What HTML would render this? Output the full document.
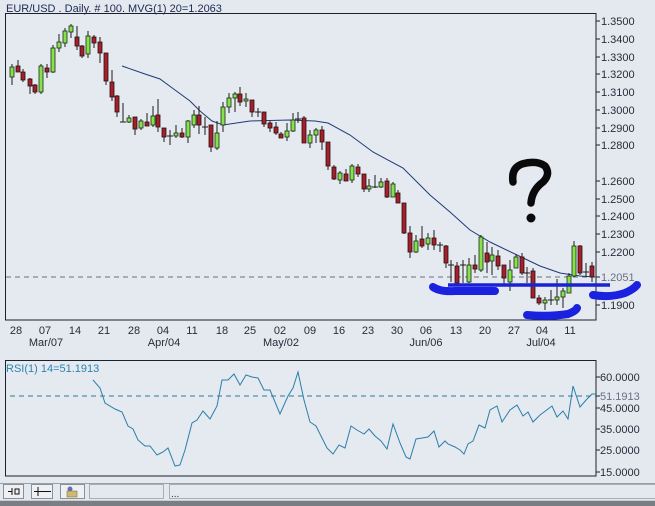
<!DOCTYPE html>
<html><head><meta charset="utf-8">
<style>
html,body{margin:0;padding:0;background:#e4e8ef;}
body{width:655px;height:506px;overflow:hidden;position:relative;font-family:"Liberation Sans",sans-serif;}
svg{position:absolute;left:0;top:0;}
text{font-family:"Liberation Sans",sans-serif;font-size:11px;fill:#2a2a3a;}
.g{fill:#86e24a;stroke:#1a2a1a;stroke-width:0.8}
.r{fill:#a3202c;stroke:#2a1010;stroke-width:0.8}
</style></head><body>
<svg width="655" height="506" viewBox="0 0 655 506">
<rect x="0" y="0" width="655" height="506" fill="#e4e8ef"/>
<rect x="5.5" y="13.5" width="590.5" height="306.5" fill="#e5e9f0" stroke="#1a2230" stroke-width="1"/>
<text x="6" y="12" style="fill:#1c2a50">EUR/USD . Daily. # 100. MVG(1) 20=1.2063</text>
<g stroke="#1a2230" stroke-width="1">
<line x1="596" y1="21" x2="600" y2="21"/><line x1="596" y1="39" x2="600" y2="39"/><line x1="596" y1="57" x2="600" y2="57"/><line x1="596" y1="74" x2="600" y2="74"/><line x1="596" y1="92" x2="600" y2="92"/><line x1="596" y1="110" x2="600" y2="110"/><line x1="596" y1="128" x2="600" y2="128"/><line x1="596" y1="145" x2="600" y2="145"/><line x1="596" y1="181" x2="600" y2="181"/><line x1="596" y1="199" x2="600" y2="199"/><line x1="596" y1="216" x2="600" y2="216"/><line x1="596" y1="234" x2="600" y2="234"/><line x1="596" y1="252" x2="600" y2="252"/><line x1="596" y1="277" x2="600" y2="277"/><line x1="596" y1="305" x2="600" y2="305"/>
</g>
<g>
<text x="601" y="25">1.3500</text><text x="601" y="43">1.3400</text><text x="601" y="61">1.3300</text><text x="601" y="78">1.3200</text><text x="601" y="96">1.3100</text><text x="601" y="114">1.3000</text><text x="601" y="132">1.2900</text><text x="601" y="149">1.2800</text><text x="601" y="185">1.2600</text><text x="601" y="203">1.2500</text><text x="601" y="220">1.2400</text><text x="601" y="238">1.2300</text><text x="601" y="256">1.2200</text><text x="601" y="281" style="fill:#6a6f80">1.2051</text><text x="601" y="309">1.1900</text>
</g>
<g text-anchor="middle">
<text x="16" y="334">28</text><text x="45" y="334">07</text><text x="75" y="334">14</text><text x="104" y="334">21</text><text x="134" y="334">28</text><text x="163" y="334">04</text><text x="192" y="334">11</text><text x="222" y="334">18</text><text x="250" y="334">25</text><text x="280" y="334">02</text><text x="310" y="334">09</text><text x="339" y="334">16</text><text x="368" y="334">23</text><text x="397" y="334">30</text><text x="426" y="334">06</text><text x="456" y="334">13</text><text x="485" y="334">20</text><text x="514" y="334">27</text><text x="542" y="334">04</text><text x="570" y="334">11</text>
<text x="46" y="346">Mar/07</text><text x="164" y="346">Apr/04</text><text x="281" y="346">May/02</text><text x="426" y="346">Jun/06</text><text x="541" y="346">Jul/04</text>
</g>
<line x1="6" y1="277" x2="596" y2="277" stroke="#6a6f80" stroke-width="1" stroke-dasharray="5,4"/>
<polyline fill="none" stroke="#1f3a78" stroke-width="1" points="122,66 145,74 160,79 175,90 190,101 200,111 212,121 223,125 250,121 290,120 315,121 328,123 350,135 373,152 403,168 430,195 450,212 470,230 490,242 517,255 540,266 560,273 580,276 595,277"/>
<g stroke="#1a1a1a" stroke-width="1">
<path d="M12 64V85M18 60V72M23 69V82M30 78V94M35 84V94M41 64V94M47 64V78M53 45V73M59 34V52M65 28V47M71 24V38M77 26V50M82 45V58M88 31V58M94 35V48M100 37V63M106 53V85M112 70V101M117 95V117M123 103V122M129 115V123M135 117V135M141 119V130M147 113V126M153 106V127M158 99V132M164 128V142M170 130V145M176 125V138M182 128V138M188 120V143M194 110V128M199 106V134M205 117V135M211 125V152M217 121V150M223 102V132M229 93V113M235 92V112M240 87V106M246 93V107M252 100V117M258 108V117M264 112V127M270 121V132M276 122V135M281 132V138M287 123V141M293 113V132M298 112V123M304 116V143M310 130V148M316 128V143M322 126V150M328 142V170M334 165V180M340 171V184M346 169V181M352 164V183M358 164V177M364 174V192M369 179V192M375 175V188M381 178V188M387 178V198M393 182V197M398 190V203M404 203V234M410 226V258M416 235V253M422 226V248M428 233V250M434 230V250M440 242V252M446 245V268M451 260V282M457 262V285M463 260V283M469 258V283M475 255V273M481 235V272M487 242V273M492 247V275M498 250V270M504 265V285M510 260V291M516 254V268M522 253V275M527 267V283M533 268V298M539 295V305M545 297V310M551 290V305M557 279V305M563 288V308M569 273V293M574 241V277M580 245V275M586 263V277M592 262V282"/>
<path d="M120 122H126M167 136H173M202 127H208M255 112H261M295 119H301M372 187H378M437 245H443M448 265H454M460 265H466M524 273H530M548 300H554M583 272H589"/>
</g>
<g>
<rect class="g" x="10" y="67" width="4" height="10"/><rect class="r" x="16" y="66" width="4" height="6"/><rect class="r" x="21" y="72" width="4" height="8"/><rect class="r" x="28" y="79" width="4" height="7"/><rect class="r" x="33" y="85" width="4" height="7"/><rect class="g" x="39" y="66" width="4" height="26"/><rect class="r" x="45" y="68" width="4" height="4"/><rect class="g" x="51" y="48" width="4" height="24"/><rect class="g" x="57" y="42" width="4" height="6"/><rect class="g" x="63" y="31" width="4" height="12"/><rect class="g" x="69" y="26" width="4" height="6"/><rect class="r" x="75" y="37" width="4" height="9"/><rect class="r" x="80" y="46" width="4" height="10"/><rect class="g" x="86" y="36" width="4" height="18"/><rect class="r" x="92" y="37" width="4" height="6"/><rect class="r" x="98" y="42" width="4" height="11"/><rect class="r" x="104" y="53" width="4" height="28"/><rect class="r" x="110" y="82" width="4" height="15"/><rect class="r" x="115" y="96" width="4" height="16"/>
<rect class="g" x="127" y="118" width="4" height="4"/><rect class="r" x="133" y="117" width="4" height="12"/><rect class="g" x="139" y="121" width="4" height="7"/><rect class="r" x="145" y="122" width="4" height="4"/><rect class="g" x="151" y="116" width="4" height="9"/><rect class="r" x="156" y="115" width="4" height="12"/><rect class="r" x="162" y="128" width="4" height="9"/><rect class="g" x="174" y="133" width="4" height="3"/><rect class="r" x="180" y="133" width="4" height="4"/><rect class="g" x="186" y="121" width="4" height="16"/><rect class="g" x="192" y="115" width="4" height="10"/><rect class="r" x="197" y="115" width="4" height="10"/><rect class="r" x="209" y="125" width="4" height="22"/><rect class="g" x="215" y="133" width="4" height="15"/><rect class="g" x="221" y="107" width="4" height="18"/><rect class="g" x="227" y="98" width="4" height="9"/><rect class="g" x="233" y="94" width="4" height="4"/><rect class="r" x="238" y="94" width="4" height="8"/><rect class="g" x="244" y="99" width="4" height="2"/><rect class="r" x="250" y="100" width="4" height="12"/><rect class="r" x="262" y="112" width="4" height="12"/><rect class="r" x="268" y="123" width="4" height="5"/><rect class="r" x="274" y="127" width="4" height="6"/><rect class="r" x="279" y="134" width="4" height="4"/><rect class="g" x="285" y="131" width="4" height="6"/><rect class="g" x="291" y="120" width="4" height="11"/><rect class="r" x="302" y="118" width="4" height="25"/><rect class="g" x="308" y="135" width="4" height="8"/><rect class="g" x="314" y="130" width="4" height="5"/><rect class="r" x="320" y="130" width="4" height="12"/><rect class="r" x="326" y="142" width="4" height="24"/><rect class="r" x="332" y="167" width="4" height="12"/><rect class="g" x="338" y="173" width="4" height="7"/><rect class="r" x="344" y="174" width="4" height="7"/><rect class="g" x="350" y="166" width="4" height="14"/><rect class="r" x="356" y="167" width="4" height="7"/><rect class="r" x="362" y="174" width="4" height="15"/><rect class="g" x="367" y="186" width="4" height="3"/><rect class="g" x="379" y="182" width="4" height="5"/><rect class="r" x="385" y="181" width="4" height="16"/><rect class="g" x="391" y="184" width="4" height="13"/><rect class="r" x="396" y="193" width="4" height="10"/><rect class="r" x="402" y="203" width="4" height="30"/><rect class="r" x="408" y="233" width="4" height="19"/><rect class="g" x="414" y="241" width="4" height="11"/><rect class="r" x="420" y="239" width="4" height="7"/><rect class="g" x="426" y="238" width="4" height="6"/><rect class="r" x="432" y="238" width="4" height="7"/><rect class="r" x="444" y="246" width="4" height="17"/><rect class="r" x="455" y="266" width="4" height="17"/><rect class="g" x="467" y="265" width="4" height="17"/><rect class="r" x="473" y="265" width="4" height="4"/><rect class="g" x="479" y="237" width="4" height="33"/><rect class="r" x="485" y="253" width="4" height="9"/><rect class="g" x="490" y="255" width="4" height="6"/><rect class="r" x="496" y="256" width="4" height="10"/><rect class="r" x="502" y="265" width="4" height="13"/><rect class="g" x="508" y="270" width="4" height="12"/><rect class="g" x="514" y="257" width="4" height="11"/><rect class="r" x="520" y="257" width="4" height="16"/><rect class="r" x="531" y="271" width="4" height="27"/><rect class="r" x="537" y="298" width="4" height="5"/><rect class="g" x="543" y="300" width="4" height="3"/><rect class="g" x="555" y="297" width="4" height="3"/><rect class="g" x="561" y="291" width="4" height="6"/><rect class="g" x="567" y="276" width="4" height="17"/><rect class="g" x="572" y="246" width="4" height="30"/><rect class="r" x="578" y="246" width="4" height="27"/><rect class="r" x="590" y="266" width="4" height="11"/>
</g>
<line x1="448" y1="285" x2="610" y2="285" stroke="#1a22d8" stroke-width="3.5"/>
<g fill="none" stroke="#1a22e0" stroke-linecap="round" stroke-linejoin="round">
<path d="M433 287 Q440 292 455 291 L495 291" stroke-width="8"/>
<path d="M527 315 Q550 317 568 314 Q576 311 577 308" stroke-width="8"/>
<path d="M593 295 Q610 298 625 293 Q634 289 637 285" stroke-width="8"/>
</g>
<path d="M513 182 Q511 168 522 164 Q537 160 545 166 Q551 174 543 182 Q532 190 531 203" fill="none" stroke="#0a0a0a" stroke-width="7.5" stroke-linecap="round"/>
<circle cx="531" cy="218" r="4.5" fill="#0a0a0a"/>

<rect x="5.5" y="360.5" width="590.5" height="115.5" fill="#e5e9f0" stroke="#1a2230" stroke-width="1"/>
<text x="6" y="372" style="fill:#2a86b0">RSI(1) 14=51.1913</text>
<line x1="10" y1="396" x2="596" y2="396" stroke="#2a7a98" stroke-width="1" stroke-dasharray="5,4"/>
<polyline fill="none" stroke="#2a7fa8" stroke-width="1" points="93,380 100,388 105,403 115,409 122,412 128,426 133,429 138,440 145,446 150,446 157,455 163,452 168,448 175,466 180,465 185,450 192,423 197,420 203,411 210,419 217,406 222,380 228,380 234,374 240,385 246,375 252,377 258,378 264,390 270,390 280,414 288,396 293,388 298,372 304,400 310,422 316,426 320,434 327,448 333,454 339,445 345,448 351,426 357,430 364,434 369,429 375,436 381,441 387,449 393,424 400,443 406,457 410,459 416,439 422,438 428,437 434,431 439,447 445,441 448,444 455,447 460,450 464,454 468,444 473,441 479,425 485,428 490,410 497,406 502,422 510,410 517,405 523,416 528,412 533,422 540,415 548,409 552,406 557,417 563,411 568,419 573,386 580,407 587,399 592,394 596,394"/>
<g stroke="#1a2230"><line x1="596" y1="377" x2="600" y2="377"/><line x1="596" y1="396" x2="600" y2="396"/><line x1="596" y1="408" x2="600" y2="408"/><line x1="596" y1="429" x2="600" y2="429"/><line x1="596" y1="450" x2="600" y2="450"/><line x1="596" y1="472" x2="600" y2="472"/></g>
<text x="600" y="381">60.0000</text><text x="600" y="400" style="fill:#6a6f88">51.1913</text><text x="600" y="412">45.0000</text><text x="600" y="433">35.0000</text><text x="600" y="454">25.0000</text><text x="600" y="476">15.0000</text>

<line x1="0" y1="483.5" x2="655" y2="483.5" stroke="#9aa0a8"/>
<rect x="3.5" y="484.5" width="20" height="14" fill="#eef0f4" stroke="#8a9098"/>
<path d="M8 491.5H12M12 488V495M15 489V494H19V489Z" stroke="#111" fill="none"/>
<rect x="31.5" y="484.5" width="21" height="14" fill="#eef0f4" stroke="#8a9098"/>
<path d="M34 491.5H51M38 487V496" stroke="#111"/>
<rect x="60.5" y="484.5" width="24" height="14" fill="#eef0f4" stroke="#8a9098"/>
<circle cx="70" cy="489" r="2.5" fill="#6070c0"/><rect x="67" y="491" width="10" height="6" fill="#d0b870" stroke="#807040" stroke-width="0.6"/>
<rect x="89.5" y="484.5" width="74" height="14" fill="#e4e8ef" stroke="#a8aeb6"/>
<rect x="169.5" y="484.5" width="490" height="14" fill="#e4e8ef" stroke="#a8aeb6"/>
<text x="171" y="497" style="font-size:10px">...</text>
<rect x="0" y="501" width="655" height="5" fill="#7a7e82"/>
<line x1="0" y1="500.5" x2="655" y2="500.5" stroke="#c8ccd0"/>
</svg>
</body></html>
